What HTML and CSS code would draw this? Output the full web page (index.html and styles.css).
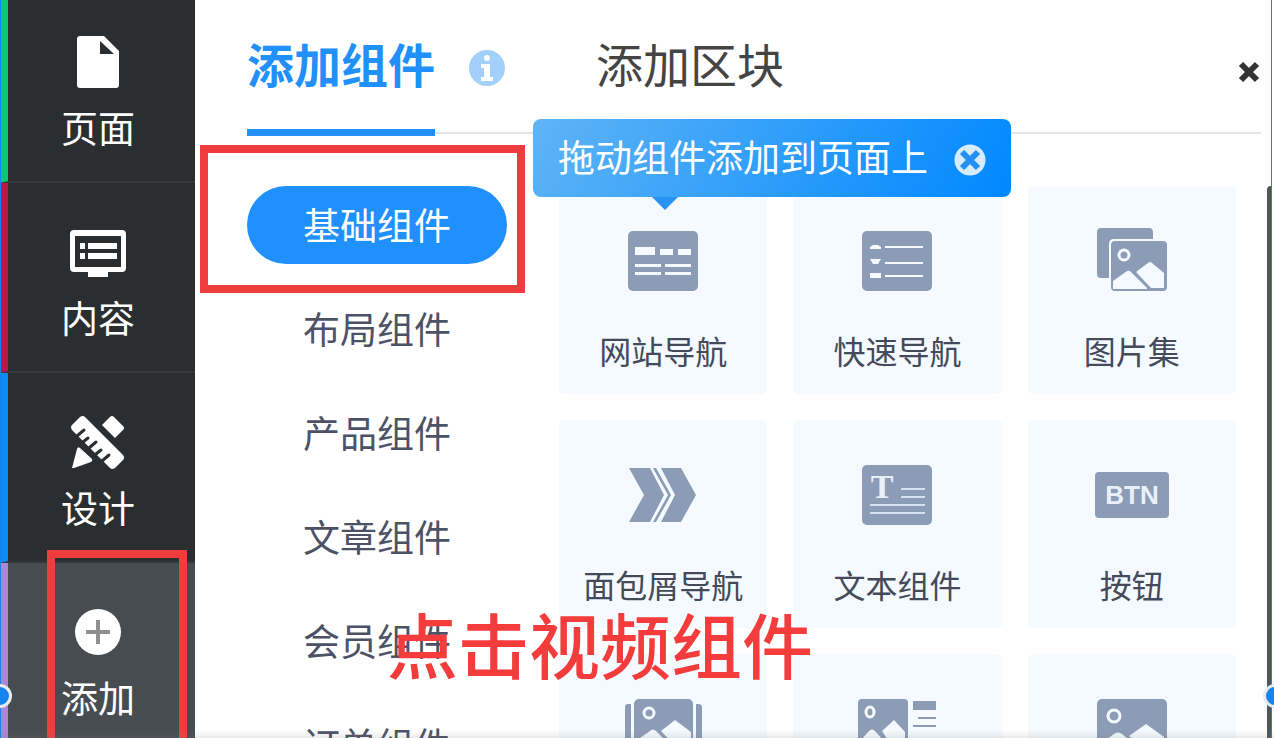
FILE: index.html
```html
<!DOCTYPE html>
<html lang="zh-CN">
<head>
    <meta charset="UTF-8">
    <meta name="viewport" content="width=device-width, initial-scale=1.0">
    <title>添加组件</title>
    <link rel="stylesheet" href="styles.css">
</head>
<body>

<div class="editor">

    <!-- 左侧导航 -->
    <nav class="sidebar">
        <a href="#" class="side-item green">
            <svg width="56" height="56" viewBox="0 0 56 56">
                <path fill="#fff" fill-rule="evenodd" d="M10 2h24l15 15v34q0 3-3 3H10q-3 0-3-3V5q0-3 3-3zm20 5v13h14z"/>
            </svg>
            <span>页面</span>
        </a>
        <a href="#" class="side-item crimson">
            <svg width="60" height="56" viewBox="0 0 60 56">
                <path fill="#fff" fill-rule="evenodd" d="M6 6h48q4 0 4 4v34q0 4-4 4H40v5H20v-5H6q-4 0-4-4V10q0-4 4-4zm1 6v31h46V12z"/>
                <path fill="#fff" d="M12 19h5v6h-5zM20 19h29v6H20zM12 29h5v6h-5zM20 29h29v6H20z"/>
            </svg>
            <span>内容</span>
        </a>
        <a href="#" class="side-item blue">
            <svg width="56" height="56" viewBox="0 0 56 56">
                <path fill="#fff" d="M2 11l8-8q3-2 5 0l38 38q2 3 0 5l-8 8q-3 2-5 0L2 16q-2-3 0-5z"/>
                <path stroke="#2a2e30" stroke-width="3" stroke-linecap="round" fill="none" d="M7 22l7-6M13 28l5-4M19 34l7-6M26 40l5-4M32 47l7-6"/>
                <path fill="#fff" d="M2 54l5-19q1-3 3-1l12 11q1 2-1 3l-17 6zM40 3q2-2 4 0l9 9q2 2 0 4l-8 8-13-13z"/>
            </svg>
            <span>设计</span>
        </a>
        <a href="#" class="side-item purple active">
            <svg width="56" height="56" viewBox="0 0 56 56">
                <circle cx="28" cy="28" r="23" fill="#fff"/>
                <path stroke="#8e9092" stroke-width="4" d="M16 28h24M28 16v24"/>
            </svg>
            <span>添加</span>
        </a>
    </nav>

    <main class="panel">
        <header class="tabs">
            <button type="button" class="tab active">添加组件</button>
            <svg class="info" width="37" height="37" viewBox="0 0 37 37">
                <circle cx="18" cy="18" r="18" fill="#a3d0fb"/>
                <circle cx="18" cy="8" r="3" fill="#fff"/>
                <path fill="#fff" d="M12 14h9v13h3v4H12v-4h3v-9h-3z"/>
            </svg>
            <button type="button" class="tab">添加区块</button>
            <button type="button" class="close" aria-label="关闭">
                <svg width="22" height="22" viewBox="0 0 22 22">
                    <path stroke="#333" stroke-width="6" d="M3 3l16 16M19 3L3 19"/>
                </svg>
            </button>
        </header>

        <div class="content">
            <!-- 组件分类 -->
            <nav class="menu">
                <a href="#" class="active">基础组件</a>
                <a href="#">布局组件</a>
                <a href="#">产品组件</a>
                <a href="#">文章组件</a>
                <a href="#">会员组件</a>
                <a href="#">订单组件</a>
            </nav>

            <!-- 组件列表 -->
            <div class="grid">
                <a href="#" class="card">
                    <svg width="80" height="70" viewBox="0 0 80 70">
                        <rect x="5" y="5" width="70" height="60" rx="5" fill="#8c9cb7"/>
                        <path fill="#f4faff" d="M12 21h20v8H12zM37 23h13v6H37zM55 23h13v6H55zM12 38h26v3H12zM42 38h26v3H42zM12 46h26v3H12zM42 46h26v3H42z"/>
                    </svg>
                    <span>网站导航</span>
                </a>
                <a href="#" class="card">
                    <svg width="80" height="70" viewBox="0 0 80 70">
                        <rect x="5" y="5" width="70" height="60" rx="5" fill="#8c9cb7"/>
                        <path fill="#f4faff" d="M13 21l3-2h5l3 2v2H13zM13 33h11l-3 5h-5zM13 47h11v5H13zM28 20h38v2H28zM28 36h38v2H28zM28 49h38v2H28z"/>
                    </svg>
                    <span>快速导航</span>
                </a>
                <a href="#" class="card">
                    <svg width="80" height="70" viewBox="0 0 80 70">
                        <path fill="#8c9cb7" d="M9 2h48q4 0 4 4v7H22q-5 0-5 5v34H9q-4 0-4-4V6q0-4 4-4z"/>
                        <rect x="19" y="15" width="56" height="50" rx="4" fill="#8c9cb7"/>
                        <circle cx="32" cy="29" r="5" fill="none" stroke="#f4faff" stroke-width="3"/>
                        <path fill="#f4faff" d="M21 55l14-10q2-1 4 1l16 16v1H21zM44 46l12-9q2-2 4 0l12 10v15H59z"/>
                    </svg>
                    <span>图片集</span>
                </a>
                <a href="#" class="card">
                    <svg width="80" height="70" viewBox="0 0 80 70">
                        <path fill="#8c9cb7" d="M6 8h21l14 27-14 27H6l15-27zM30 8h3l15 27-15 27h-3l15-27zM38 8h20l15 27-15 27H38l14-27z"/>
                    </svg>
                    <span>面包屑导航</span>
                </a>
                <a href="#" class="card">
                    <svg width="80" height="70" viewBox="0 0 80 70">
                        <rect x="5" y="5" width="70" height="60" rx="5" fill="#8c9cb7"/>
                        <text x="25" y="38" class="icon-t">T</text>
                        <path fill="#d8e2ee" d="M44 28h24v2H44zM44 36h24v2H44zM13 44h55v2H13zM13 52h55v2H13z"/>
                    </svg>
                    <span>文本组件</span>
                </a>
                <a href="#" class="card">
                    <svg width="80" height="70" viewBox="0 0 80 70">
                        <rect x="3" y="12" width="74" height="46" rx="4" fill="#8c9cb7"/>
                        <text x="40" y="44" class="icon-btn">BTN</text>
                    </svg>
                    <span>按钮</span>
                </a>
                <a href="#" class="card">
                    <svg width="80" height="70" viewBox="0 0 80 70">
                        <path fill="#8c9cb7" d="M8 10v50H5q-3 0-3-3V13q0-3 3-3zM73 10v50h2q4 0 4-3V13q0-3-4-3z"/>
                        <rect x="11" y="5" width="59" height="60" rx="5" fill="#8c9cb7"/>
                        <circle cx="26" cy="19" r="5" fill="none" stroke="#f4faff" stroke-width="3"/>
                        <path fill="#f4faff" d="M14 46l13-9q3-3 6 0l18 18v5H14zM38 37l14-11 16 12v22H60z"/>
                    </svg>
                </a>
                <a href="#" class="card">
                    <svg width="80" height="70" viewBox="0 0 80 70">
                        <rect x="1" y="5" width="50" height="60" rx="4" fill="#8c9cb7"/>
                        <path fill="#8c9cb7" d="M56 7h23v9H56zM61 23h18v2H61zM56 31h23v2H56z"/>
                        <ellipse cx="13" cy="18" rx="4" ry="5" fill="none" stroke="#f4faff" stroke-width="3"/>
                        <path fill="#f4faff" d="M4 46l8-9q3-3 6 0l16 18v5H4zM25 37l12-11 11 12v22H40z"/>
                    </svg>
                </a>
                <a href="#" class="card">
                    <svg width="80" height="70" viewBox="0 0 80 70">
                        <rect x="5" y="5" width="70" height="60" rx="5" fill="#8c9cb7"/>
                        <circle cx="22" cy="22" r="6" fill="none" stroke="#f4faff" stroke-width="3"/>
                        <path fill="#f4faff" d="M8 50l14-10q4-3 8 0l18 15v5H8zM37 42l17-12 18 13v17H60z"/>
                    </svg>
                </a>
            </div>

            <div class="scrollbar"></div>
        </div>
    </main>

    <!-- 提示气泡 -->
    <div class="tip">
        <span>拖动组件添加到页面上</span>
        <button type="button" aria-label="关闭提示">
            <svg width="32" height="32" viewBox="0 0 32 32">
                <circle cx="16" cy="16" r="14" fill="#d5ebff"/>
                <path stroke="#2390f2" stroke-width="6" d="M8 8l16 16M24 8L8 24"/>
                <circle cx="16" cy="16" r="14" fill="none" stroke="#d5ebff" stroke-width="3"/>
            </svg>
        </button>
    </div>

    <!-- 教程标注 -->
    <div class="mark mark-menu"></div>
    <div class="mark mark-add"></div>
    <p class="mark-text">点击视频组件</p>

    <!-- 选中边框 -->
    <div class="edge edge-left"></div>
    <div class="edge edge-right"></div>
    <div class="handle handle-left"></div>
    <div class="handle handle-right"></div>
    <div class="fade"></div>
</div>

</body>
</html>
```
FILE: styles.css
```css
* {
    box-sizing: border-box;
}

body {
    margin: 0;
    font-family: "Noto Sans CJK SC", sans-serif;
    background: #fff;
}

a {
    text-decoration: none;
}

button {
    padding: 0;
    border: none;
    background: none;
    font-family: inherit;
    cursor: pointer;
}

svg {
    display: block;
}

.editor {
    position: relative;
    display: flex;
    height: 100vh;
    overflow: hidden;
}

/* 左侧导航 */
.sidebar {
    flex: 0 0 195px;
    display: flex;
    flex-direction: column;
    margin-top: -7px;
    background: #2a2e30;
}

.side-item {
    flex: 0 0 190px;
    display: flex;
    flex-direction: column;
    align-items: center;
    gap: 10px;
    padding: 41px 7px 0 0;
    border-left: 8px solid;
    border-bottom: 2px solid #35393c;
    color: #fff;
    font-size: 37px;
    line-height: 54px;
}

.side-item.green {
    border-left-color: #0cc47a;
}

.side-item.crimson {
    border-left-color: #b01c50;
}

.side-item.blue {
    border-left-color: #0c8cf5;
}

.side-item.purple {
    border-left-color: #a988d8;
}

.side-item.active {
    background: #474c51;
}

/* 右侧面板 */
.panel {
    flex: 1;
    display: flex;
    flex-direction: column;
    min-width: 0;
}

.tabs {
    flex: 0 0 134px;
    display: flex;
    align-items: center;
    margin: 0 13px 0 52px;
    border-bottom: 2px solid #e4e4e6;
}

.tab {
    height: 136px;
    margin-bottom: -4px;
    padding-bottom: 4px;
    border-bottom: 7px solid transparent;
    font-size: 47px;
    color: #444;
}

.tab.active {
    color: #2190fa;
    font-weight: bold;
    border-bottom-color: #2190fa;
}

.info {
    margin: 4px 90px 0 34px;
}

.close {
    margin: 12px 1px 0 auto;
}

.content {
    flex: 1;
    display: flex;
    min-height: 0;
    padding: 52px 3px 0 52px;
}

/* 组件分类 */
.menu {
    flex: 0 0 260px;
    display: flex;
    flex-direction: column;
    gap: 26px;
}

.menu a {
    flex: 0 0 78px;
    border-radius: 39px;
    text-align: center;
    font-size: 37px;
    line-height: 76px;
    color: #4c5266;
}

.menu a.active {
    background: #2190ff;
    color: #fff;
}

/* 组件列表 */
.grid {
    flex: 1;
    display: grid;
    grid-template-columns: repeat(3, 1fr);
    grid-auto-rows: 208px;
    gap: 26px;
    margin: 0 31px 0 52px;
}

.card {
    display: flex;
    flex-direction: column;
    align-items: center;
    gap: 30px;
    padding-top: 40px;
    border-radius: 5px;
    background: #f4faff;
    color: #454a5a;
    font-size: 32px;
    line-height: 48px;
}

.icon-t {
    font: bold 34px "Liberation Serif", serif;
    text-anchor: middle;
    fill: #e8f1fa;
}

.icon-btn {
    font: bold 26px "Liberation Sans", sans-serif;
    text-anchor: middle;
    fill: #e8f1fa;
}

.scrollbar {
    flex: 0 0 4px;
    border-radius: 4px 0 0 0;
    background: #555;
}

/* 提示气泡 */
.tip {
    position: absolute;
    left: 533px;
    top: 119px;
    display: flex;
    align-items: center;
    gap: 26px;
    height: 78px;
    padding: 0 25px;
    border-radius: 8px;
    background: linear-gradient(120deg, #5fb4f5, #0088ff);
    color: #fff;
    font-size: 37px;
}

.tip span {
    line-height: 78px;
    padding-bottom: 4px;
}

.tip button {
    padding-top: 4px;
}

.tip::after {
    content: "";
    position: absolute;
    left: 119px;
    top: 78px;
    border: 13px solid transparent;
    border-top-color: #2793f2;
    border-bottom: none;
}

/* 教程标注 */
.mark {
    position: absolute;
    border: 8px solid #ef3d3d;
}

.mark-menu {
    left: 200px;
    top: 145px;
    width: 325px;
    height: 148px;
}

.mark-add {
    left: 47px;
    top: 550px;
    width: 140px;
    height: 220px;
}

.mark-text {
    position: absolute;
    left: 387px;
    top: 592px;
    margin: 0;
    font-size: 71px;
    font-weight: 500;
    line-height: 100px;
    color: #f43c3c;
    white-space: nowrap;
}

/* 选中边框 */
.edge {
    position: absolute;
    top: 0;
    bottom: 0;
    width: 1px;
    background: #1684ec;
}

.edge-left {
    left: 0;
}

.edge-right {
    right: 2px;
}

.handle {
    position: absolute;
    top: 684px;
    width: 24px;
    height: 24px;
    border: 3px solid #e8eaf0;
    border-radius: 50%;
    background: #1684f0;
}

.handle-left {
    left: -12px;
}

.handle-right {
    right: -13px;
}

.fade {
    position: absolute;
    left: 0;
    right: 0;
    bottom: 0;
    height: 8px;
    background: linear-gradient(rgba(120, 120, 120, 0), rgba(120, 120, 120, 0.15));
}
```
